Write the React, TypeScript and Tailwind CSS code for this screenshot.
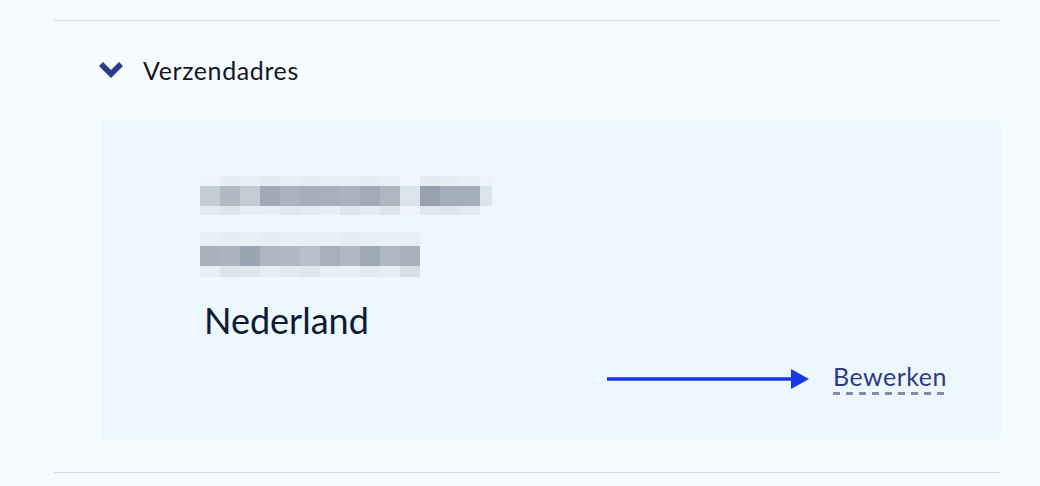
const row1Top = ['#eef4f9', '#e6edf3', '#eaf1f6', '#e4ebf1', '#e8eff5', '#e6edf3', '#e8eff5', '#e9f0f5', '#e6edf3', '#e9f0f5', '#f0f6fa', '#e4ebf1', '#e6edf3', '#e8eff5', '#eef4f9']
const row1Main = ['#c5ced6', '#b0bac4', '#c3ccd5', '#a0abb8', '#aab5c1', '#a5b0bc', '#a6b1bd', '#abb5c1', '#a1acb8', '#aeb8c3', '#dde5ec', '#97a2b0', '#a3aebb', '#a3aebb', '#dde5ec']
const row1Bot = ['#e3eaf0', '#dde5ec', '#e6edf3', '#e8eff5', '#e0e8ee', '#e3eaf0', '#e8eff5', '#dfe7ed', '#e5ecf2', '#dde5ec', '#edf3f8', '#e0e8ee', '#dde5ec', '#e3eaf0', '#eef7fe']

const row2Top = ['#eaf1f6', '#e6edf3', '#e8eff5', '#e6edf3', '#e9f0f5', '#e8eff5', '#eaf1f6', '#e6edf3', '#e8eff5', '#eaf1f6', '#e9f0f5']
const row2Main = ['#a8b2be', '#abb5c1', '#9aa6b3', '#adb7c2', '#b0bac4', '#b7c0ca', '#a6b1bd', '#afb9c4', '#9ea9b6', '#aeb8c3', '#a8b2be']
const row2Bot = ['#e8eff5', '#dde5ec', '#dfe7ed', '#e6edf3', '#e3eaf0', '#dfe7ed', '#e9f0f5', '#e8eff5', '#e3eaf0', '#e6edf3', '#d8e1e9']

// blurred (pixelated) address line
function Pixels({ top, main, bot, topH, botH, lastW }: { top: string[]; main: string[]; bot: string[]; topH: string; botH: string; lastW: string }) {
  const cell = (c: string, i: number, len: number, h: string) => (
    <div key={i} className={`${h} ${i === len - 1 ? lastW : 'w-[20px]'}`} style={{ backgroundColor: c }} />
  )
  return (
    <div className="flex flex-col">
      <div className="flex">{top.map((c, i) => cell(c, i, top.length, topH))}</div>
      <div className="flex">{main.map((c, i) => cell(c, i, main.length, 'h-[20px]'))}</div>
      <div className="flex">{bot.map((c, i) => cell(c, i, bot.length, botH))}</div>
    </div>
  )
}

export default function App() {
  return (
    <div className="w-[1040px] h-[486px] bg-[#f5fbff] pt-[20px] pl-[54px] pr-[39px] font-['Lato','Noto_Sans',sans-serif] overflow-hidden">
      <div className="border-t border-[#d7dde3]">
        {/* header */}
        <div className="flex items-center h-[98px] pl-[44px]">
          <svg width="26" height="18" viewBox="0 0 26 18" className="text-[#2d3b8c]">
            <path d="M1 5 L5 1 L13 9 L21 1 L25 5 L13 17 Z" fill="currentColor" />
          </svg>
          <span className="ml-[19px] text-[25px] leading-[30px] tracking-[0.6px] text-[#14171f]">Verzendadres</span>
        </div>

        {/* address box */}
        <div className="ml-[47px] h-[321px] bg-[#edf7fe] rounded-[3px] pt-[57px] pl-[99px] pr-[54px] flex flex-col">
          <Pixels top={row1Top} main={row1Main} bot={row1Bot} topH="h-[10px]" botH="h-[9px]" lastW="w-[12px]" />
          <div className="mt-[17px]">
            <Pixels top={row2Top} main={row2Main} bot={row2Bot} topH="h-[14px]" botH="h-[11px]" lastW="w-[20px]" />
          </div>
          <div className="mt-[23px] pl-[4px] text-[36px] leading-[40px] text-[#0d1b33]">Nederland</div>
          <div className="mt-[22px] flex items-center justify-end">
            <svg width="202" height="22" viewBox="0 0 202 22">
              <line x1="0" y1="11" x2="186" y2="11" stroke="#1a35e6" strokeWidth="3.5" />
              <path d="M184 1 L202 11 L184 21 Z" fill="#1a35e6" />
            </svg>
            <a className="ml-[24px] flex flex-col">
              <span className="text-[25px] leading-[28px] tracking-[0.5px] text-[#2e3b85]">Bewerken</span>
              <span className="mt-[2px] h-[3px] bg-[repeating-linear-gradient(90deg,#848caa_0_7px,transparent_7px_13px)]" />
            </a>
          </div>
        </div>

        <div className="mt-[32px] border-t border-[#d7dde3]" />
      </div>
    </div>
  )
}
